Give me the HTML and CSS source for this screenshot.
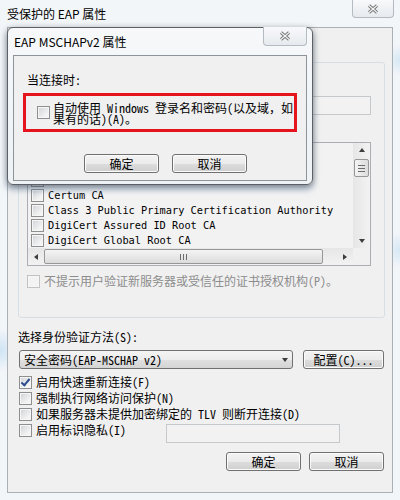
FILE: index.html
```html
<!DOCTYPE html>
<html lang="zh-CN">

<head>
    <meta charset="utf-8">
    <meta name="viewport" content="width=device-width, initial-scale=1.0">
    <title>受保护的 EAP 属性</title>
    <link rel="stylesheet" href="styles.css">
</head>

<body>
    <div class="window">
        <header class="titlebar">
            <span class="title">受保护的 EAP 属性</span>
            <button class="close">
                <svg width="12" height="10" viewBox="0 0 12 10"><path d="M2 1.5 L10 8.5 M10 1.5 L2 8.5" stroke="#747474" stroke-width="3"/><path d="M2 1.5 L10 8.5 M10 1.5 L2 8.5" stroke="#f6f6f6" stroke-width="1.1"/></svg>
            </button>
        </header>

        <main class="client">
            <section class="group">
                <!-- the rows above the text box sit under the MSCHAPv2 dialog -->
                <div class="textbox servers"></div>

                <div class="list">
                    <div class="rows">
                        <div class="row"><span class="box"></span></div>
                        <div class="row"><span class="box"></span></div>
                        <div class="row"><span class="box"></span></div>
                        <div class="row"><span class="box"></span>Certum CA</div>
                        <div class="row"><span class="box"></span>Class 3 Public Primary Certification Authority</div>
                        <div class="row"><span class="box"></span>DigiCert Assured ID Root CA</div>
                        <div class="row"><span class="box"></span>DigiCert Global Root CA</div>
                        <div class="row"><span class="box"></span></div>
                    </div>
                    <div class="vscroll">
                        <span class="arrow up"></span>
                        <div class="vtrack"><span class="vthumb"></span></div>
                        <span class="arrow down"></span>
                    </div>
                    <div class="hscroll">
                        <span class="arrow left"></span>
                        <div class="htrack"><span class="hthumb"></span></div>
                        <span class="arrow right"></span>
                    </div>
                    <div class="corner"></div>
                </div>

                <div class="check disabled after-list"><span class="box"></span>不提示用户验证新服务器或受信任的证书授权机构(P)。</div>
            </section>

            <div class="label method-label">选择身份验证方法(S):</div>
            <div class="method-row">
                <div class="select">安全密码(EAP-MSCHAP v2)<span class="arrow down"></span></div>
                <button class="btn config">配置(C)...</button>
            </div>

            <div class="options">
                <div class="check"><span class="box checked"></span>启用快速重新连接(F)</div>
                <div class="check"><span class="box"></span>强制执行网络访问保护(N)</div>
                <div class="check"><span class="box"></span>如果服务器未提供加密绑定的 TLV 则断开连接(D)</div>
                <div class="privacy">
                    <div class="check"><span class="box"></span>启用标识隐私(I)</div>
                    <div class="textbox"></div>
                </div>
            </div>

            <div class="actions">
                <button class="btn">确定</button>
                <button class="btn">取消</button>
            </div>
        </main>

        <div class="dialog">
            <header class="titlebar small">
                <span class="title">EAP MSCHAPv2 属性</span>
                <button class="close">
                    <svg width="12" height="10" viewBox="0 0 12 10"><path d="M2 1.5 L10 8.5 M10 1.5 L2 8.5" stroke="#747474" stroke-width="3"/><path d="M2 1.5 L10 8.5 M10 1.5 L2 8.5" stroke="#f6f6f6" stroke-width="1.1"/></svg>
                </button>
            </header>
            <div class="dialog-client">
                <div class="prompt">当连接时:</div>
                <div class="highlight">
                    <span class="box"></span>
                    <span class="wrap">自动使用 Windows 登录名和密码(以及域，如果有的话)(A)。</span>
                </div>
                <div class="dialog-actions">
                    <button class="btn">确定</button>
                    <button class="btn">取消</button>
                </div>
            </div>
        </div>
    </div>
</body>

</html>
```

FILE: styles.css
```css
*,
body * {
    box-sizing: border-box;
}

body {
    margin: 0;
    padding: 0;
    background: #fff;
    color: #000;
    font-family: "Noto Sans Mono CJK SC", "Liberation Mono", "Noto Sans CJK SC", monospace;
    font-size: 12px;
}

button {
    font: inherit;
    color: inherit;
    padding: 0;
}

/* outer window */
.window {
    position: relative;
    width: 400px;
    height: 500px;
    padding: 0 7px;
    overflow: hidden;
    background:
        radial-gradient(circle at 0 350px, #cfe4f4 0, rgba(207, 228, 244, 0) 22px),
        radial-gradient(circle at 400px 250px, #d6e8f5 0, rgba(214, 232, 245, 0) 18px),
        radial-gradient(circle at 400px 60px, #d6e8f5 0, rgba(214, 232, 245, 0) 16px),
        #f3f6f9;
}

.titlebar {
    display: flex;
    justify-content: space-between;
    align-items: flex-start;
    height: 27px;
}

.title {
    font-family: "Noto Sans CJK SC", sans-serif;
    font-size: 12px;
    line-height: 27px;
}

.close {
    width: 42px;
    height: 18px;
    margin-right: -1px;
    border: 1px solid #b4bbc2;
    border-top: none;
    border-radius: 0 0 4px 4px;
    background: linear-gradient(#f8f9fb, #e6eaee);
    display: flex;
    align-items: center;
    justify-content: center;
}

.client {
    height: 466px;
    border: 1px solid #a9b0b6;
    background: #f0f0f0;
    padding: 34px 7px 0 10px;
}

/* group box */
.group {
    height: 256px;
    border: 1px solid #d5dfe5;
    border-radius: 3px;
    padding: 33px 13px 0 8px;
}

.check {
    display: flex;
    align-items: center;
    gap: 4px;
    line-height: 15px;
    white-space: nowrap;
}

.check.disabled {
    color: #8d8d8d;
}

.label {
    line-height: 15px;
}

.box {
    flex: none;
    width: 13px;
    height: 13px;
    border: 1px solid #8f8f8f;
    background: linear-gradient(135deg, #cfd2d6 0%, #f4f4f4 75%);
    box-shadow: inset 0 0 0 1px #f6f6f6;
    display: inline-flex;
    align-items: center;
    justify-content: center;
}

.box.checked::after {
    content: "";
    width: 3px;
    height: 7px;
    margin-top: -2px;
    border: solid #2c4d8f;
    border-width: 0 2px 2px 0;
    transform: rotate(40deg);
}

.disabled .box {
    border-color: #c2c2c2;
    background: #f3f3f3;
}

.textbox {
    height: 19px;
    border: 1px solid #c6c9cc;
    background: #f2f2f2;
}

/* certificate list */
.list {
    height: 124px;
    margin-top: 27px;
    display: grid;
    grid-template-columns: 1fr 17px;
    grid-template-rows: 1fr 17px;
    border: 1px solid #abadb3;
    background: #f2f2f2;
    overflow: hidden;
}

.rows {
    overflow: hidden;
}

.row {
    display: flex;
    align-items: center;
    gap: 4px;
    height: 15px;
    line-height: 15px;
    padding-left: 3px;
    white-space: nowrap;
    font-family: "DejaVu Sans Mono", monospace;
    font-size: 10.3px;
}

.vscroll,
.hscroll {
    display: flex;
    align-items: center;
    background: linear-gradient(90deg, #e6e6e6, #f2f2f2);
}

.vscroll {
    flex-direction: column;
}

.hscroll {
    background: linear-gradient(#e6e6e6, #f2f2f2);
}

.vtrack {
    flex: 1;
    width: 100%;
    padding: 1px;
}

.htrack {
    flex: 1;
    height: 100%;
    padding: 1px 14px 1px 0;
}

.vthumb,
.hthumb {
    display: block;
    border: 1px solid #979797;
    border-radius: 2px;
    background: linear-gradient(90deg, #f4f4f4, #dcdcdc);
}

.vthumb {
    height: 18px;
    margin-top: 1px;
    background:
        linear-gradient(#6d6d6d, #6d6d6d) center 5px / 7px 1px no-repeat,
        linear-gradient(#6d6d6d, #6d6d6d) center 8px / 7px 1px no-repeat,
        linear-gradient(#6d6d6d, #6d6d6d) center 11px / 7px 1px no-repeat,
        linear-gradient(90deg, #f4f4f4, #dcdcdc);
}

.hthumb {
    height: 100%;
    background:
        linear-gradient(#6d6d6d, #6d6d6d) calc(50% - 3px) center / 1px 6px no-repeat,
        linear-gradient(#6d6d6d, #6d6d6d) center center / 1px 6px no-repeat,
        linear-gradient(#6d6d6d, #6d6d6d) calc(50% + 3px) center / 1px 6px no-repeat,
        linear-gradient(#f4f4f4, #dcdcdc);
}

.arrow {
    flex: none;
    width: 0;
    height: 0;
    border: 3.5px solid transparent;
}

.vscroll .arrow {
    margin: 5px 0;
}

.hscroll .arrow {
    margin: 0 6px;
}

.arrow.up {
    border-top: none;
    border-bottom: 4px solid #3c3c3c;
}

.arrow.down {
    border-bottom: none;
    border-top: 4px solid #3c3c3c;
}

.arrow.left {
    border-left: none;
    border-right: 4px solid #3c3c3c;
}

.arrow.right {
    border-right: none;
    border-left: 4px solid #3c3c3c;
}

.corner {
    background: #f0f0f0;
}

.after-list {
    margin-top: 8px;
    line-height: 14px;
}

/* lower part */
.method-label {
    margin-top: 12px;
    line-height: 14px;
}

.method-row {
    display: flex;
    margin-top: 6px;
    padding-left: 1px;
}

.select {
    width: 274px;
    height: 19px;
    display: flex;
    align-items: center;
    justify-content: space-between;
    padding: 0 4px;
    border: 1px solid #707070;
    border-radius: 3px;
    background: linear-gradient(#f4f4f4 0%, #ececec 50%, #e0e0e0 51%, #d4d4d4 100%);
}

.select .arrow {
    border-width: 4px 3.5px 0;
}

.btn {
    width: 75px;
    height: 19px;
    border: 1px solid #707070;
    border-radius: 3px;
    background: linear-gradient(#f3f3f3 0%, #ebebeb 50%, #dddddd 51%, #cfcfcf 100%);
    box-shadow: inset 0 0 0 1px #fbfbfb;
    font-family: "Noto Sans CJK SC", sans-serif;
    line-height: 17px;
}

.btn.config {
    width: 81px;
    margin-left: auto;
    margin-right: 1px;
    font-family: inherit;
}

.options {
    margin-top: 5px;
    padding-left: 1px;
}

.options .check {
    line-height: 16px;
}

.privacy {
    display: flex;
    align-items: flex-start;
}

.privacy .check {
    width: 147px;
}

.privacy .textbox {
    width: 174px;
    margin-top: 2px;
}

.actions {
    display: flex;
    justify-content: flex-end;
    gap: 8px;
    margin-top: 9px;
    padding-right: 1px;
}

/* EAP MSCHAPv2 dialog on top */
.dialog {
    position: absolute;
    left: 7px;
    top: 27px;
    width: 306px;
    height: 158px;
    padding: 0 5px 4px;
    border: 1px solid #5d6166;
    border-radius: 6px;
    background: linear-gradient(#f6f8fa, #eef2f5);
    box-shadow: 0 2px 7px rgba(0, 0, 0, 0.45), 0 5px 6px rgba(120, 160, 210, 0.35);
}

.titlebar.small .title {
    padding-left: 1px;
}

.titlebar.small .close {
    width: 44px;
    height: 19px;
    margin-top: -1px;
    margin-right: 0;
}

.dialog-client {
    height: 126px;
    border: 1px solid #8c949a;
    background: #f0f0f0;
}

.prompt {
    margin-top: 17px;
    padding-left: 13px;
    line-height: 14px;
}

.highlight {
    display: flex;
    align-items: center;
    gap: 3px;
    width: 274px;
    height: 39px;
    margin: 6px 0 0 9px;
    padding-left: 11px;
    border: 3px solid #e5141c;
}

.wrap {
    width: 242px;
    line-height: 11px;
}

.dialog-actions {
    display: flex;
    gap: 13px;
    margin-top: 22px;
    padding-left: 70px;
}
```
